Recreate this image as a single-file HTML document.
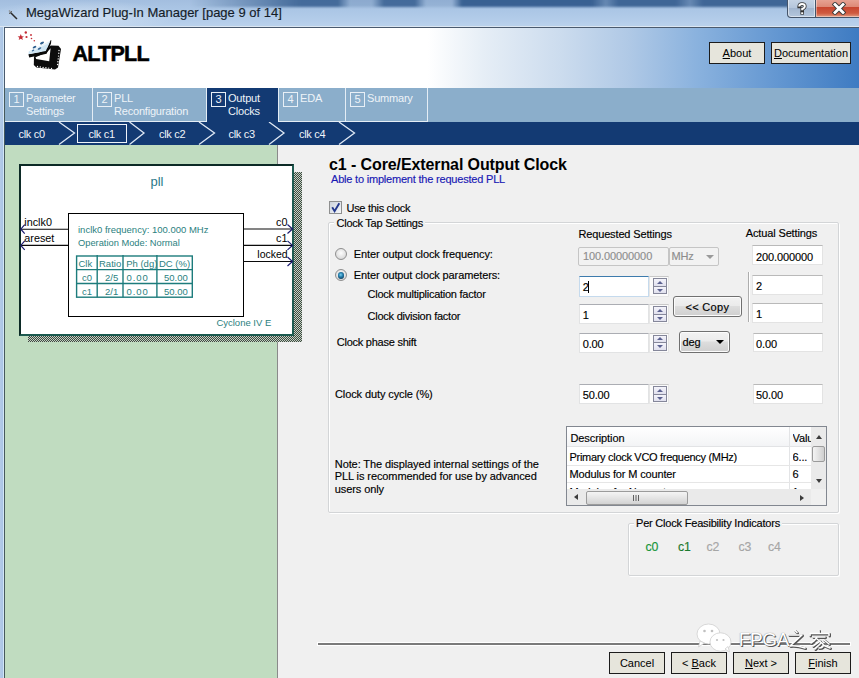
<!DOCTYPE html>
<html><head><meta charset="utf-8">
<style>
*{box-sizing:border-box;margin:0;padding:0}
html,body{width:859px;height:678px;overflow:hidden;background:#F0F0F0;font-family:"Liberation Sans",sans-serif;font-size:11px;color:#000}
.a{position:absolute}
.t{position:absolute;white-space:nowrap;line-height:1}
#title{left:0;top:0;width:859px;height:28px;background:linear-gradient(180deg,#a3bedf 0%,#abc6e5 35%,#b4cdea 75%,#bcd3ec 100%)}
#frame{left:0;top:27px;width:5px;height:651px;background:linear-gradient(90deg,#b4cbe6 0,#a9c4e6 3px,#d2e6f6 3px,#d2e6f6 4px,#46595c 4px)}
#header{left:4px;top:27px;width:855px;height:61px;border-top:1px solid #4a5a6e;border-left:1px solid #4a5a6e;background:linear-gradient(90deg,#fff 0%,#fff 49.5%,#e6eef6 56%,#ccdcee 65%,#b0c9e6 73%,#8ab2de 81%,#6598d2 90%,#3e7bc2 100%)}
#tabs{left:5px;top:88px;width:854px;height:34px;background:#8baecb}
#clkrow{left:5px;top:122px;width:854px;height:23px;background:#133a73}
#green{left:5px;top:145px;width:272px;height:533px;background:#c0dcc0}
#vline{left:277px;top:145px;width:1px;height:533px;background:#8a8a8a}
.btn{position:absolute;height:22px;border:1px solid #1c1c1c;background:#e6e5dc;text-align:center;line-height:20px;font-size:11px;color:#000}
.tab{position:absolute;top:88px;height:34px;color:#eef3f8;font-size:11px}
.tab.in{border-right:1px solid #e4edf5;border-bottom:1px solid #e4edf5}
.num{position:absolute;left:4px;top:4px;width:15px;height:15px;border:1px solid #e8eff6;text-align:center;line-height:13px;font-size:11px}
.tl{position:absolute;left:21px;top:4px;line-height:12.5px;letter-spacing:-0.2px}
.clk{position:absolute;top:129px;color:#f0f4fa;font-size:11px;line-height:1;letter-spacing:-0.3px}

.tx{position:absolute;white-space:nowrap;line-height:1;font-size:11px;letter-spacing:-0.12px;color:#000;-webkit-text-stroke:0.15px currentColor}
.tb{position:absolute;background:#fff;border:1px solid #e2e3e4;border-top-color:#abadb3}
.spin{position:absolute;width:20px;background:#fbfbfb;border:1px solid #e6e6e6;border-top-color:#c8c8c8}
.sb{position:absolute;left:3px;width:14px;height:8.5px;border:1px solid #85879a;background:linear-gradient(#f4f4fb,#e0e0ee)}
.sb.u{top:1px}.sb.d{top:8.5px}
.sb::after{content:"";position:absolute;left:3px;border-left:3.5px solid transparent;border-right:3.5px solid transparent}
.sb.u::after{top:1.8px;border-bottom:3.5px solid #5b6190}
.sb.d::after{top:2px;border-top:3.5px solid #5b6190}
.radio{position:absolute;width:12px;height:12px;border-radius:50%;border:1px solid #8f8f8f;background:radial-gradient(circle at 50% 40%,#fdfdfd,#dcdcdc 70%,#c8c8c8)}
.gb{position:absolute;border:1px solid #d3d5d7;border-radius:2px;box-shadow:inset 1px 1px 0 #fff,1px 1px 0 #fff}
.wbtn{position:absolute;border:1px solid #707070;border-radius:3px;background:linear-gradient(#f2f2f2 0%,#ebebeb 45%,#dddddd 50%,#cfcfcf 100%);box-shadow:inset 0 0 0 1px #fcfcfc}
</style></head><body>
<!-- Title bar -->
<div id="title" class="a"></div>
<div id="frame" class="a"></div>
<!-- header -->
<div id="header" class="a"></div>
<div class="t" style="left:72.5px;top:43.6px;font-size:21.5px;font-weight:bold;letter-spacing:-0.75px;color:#000;-webkit-text-stroke:0.5px #000">ALTPLL</div>
<div class="btn" style="left:709px;top:42px;width:56px"><u>A</u>bout</div>
<div class="btn" style="left:771px;top:42px;width:80px"><u>D</u>ocumentation</div>
<!-- tabs -->
<div id="tabs" class="a"></div>
<div class="tab in" style="left:5px;width:88px"><div class="num">1</div><div class="tl">Parameter<br>Settings</div></div>
<div class="tab in" style="left:93px;width:114px"><div class="num">2</div><div class="tl">PLL<br>Reconfiguration</div></div>
<div class="tab" style="left:207px;width:71px;background:#133a73"><div class="num">3</div><div class="tl">Output<br>Clocks</div></div>
<div class="tab in" style="left:278px;width:68px;border-left:1px solid #e4edf5"><div class="num" style="left:4px">4</div><div class="tl">EDA</div></div>
<div class="tab in" style="left:346px;width:82px"><div class="num">5</div><div class="tl">Summary</div></div>
<div id="clkrow" class="a"></div>
<!-- clk row -->
<svg class="a" style="left:0;top:122px" width="859" height="23">
<g fill="none" stroke="#dfe8f4" stroke-width="1.3">
<polyline points="59,0 74.5,11 59,22.5"/>
<polyline points="129.5,0 144,11 129.5,22.5"/>
<polyline points="199,0 214.5,11 199,22.5"/>
<polyline points="269,0 284,11 269,22.5"/>
<polyline points="339,0 354.5,11 339,22.5"/>
</g>
<rect x="77.5" y="2.5" width="49" height="18" fill="none" stroke="#eef3fa" stroke-width="1"/>
</svg>
<div class="clk" style="left:18.5px">clk c0</div>
<div class="clk" style="left:88.5px">clk c1</div>
<div class="clk" style="left:159px">clk c2</div>
<div class="clk" style="left:228.5px">clk c3</div>
<div class="clk" style="left:299px">clk c4</div>
<div id="green" class="a"></div>
<div id="vline" class="a"></div>
<!-- diagram -->
<div class="a" style="left:28px;top:172px;width:274px;height:170px;background:repeating-conic-gradient(#3e4a40 0 25%,#c4d0c4 0 50%) 0 0/2px 2px"></div>
<div class="a" style="left:19px;top:164px;width:275px;height:172px;background:#fff;border:2px solid #0c2a26;border-right-color:#1d5a50;border-bottom-color:#1d5a50"></div>
<div class="a" style="left:68px;top:213px;width:176px;height:104px;border:1px solid #000"></div>
<div class="t" style="left:150.5px;top:175px;font-size:13px;color:#2a7888">pll</div>
<svg class="a" style="left:0;top:200px" width="300" height="80">
<g stroke="#0a0a0a" stroke-width="1.1" fill="none">
<line x1="20" y1="29.2" x2="68" y2="29.2"/>
<line x1="20" y1="45.4" x2="68" y2="45.4"/>
<line x1="243" y1="29" x2="293" y2="29"/>
<line x1="243" y1="45.4" x2="293" y2="45.4"/>
<line x1="243" y1="61.5" x2="293" y2="61.5"/>
</g>
<g stroke="#1b1b70" stroke-width="1.2" fill="none">
<polyline points="24.7,24.7 20.8,29.2 24.7,33.6"/>
<polyline points="24.7,40.9 20.8,45.4 24.7,49.8"/>
<polyline points="287.5,24.5 292.5,29 287.5,33.5"/>
<polyline points="287.5,40.9 292.5,45.4 287.5,49.9"/>
<polyline points="287.5,57 292.5,61.5 287.5,66"/>
</g>
</svg>
<div class="t" style="left:24.3px;top:217px;font-size:10.8px;color:#000">inclk0</div>
<div class="t" style="left:24.3px;top:232.7px;font-size:10.8px;color:#000">areset</div>
<div class="t" style="left:276px;top:216.5px;font-size:10.8px;color:#000">c0</div>
<div class="t" style="left:276px;top:232.5px;font-size:10.8px;color:#000">c1</div>
<div class="t" style="left:257.3px;top:248.5px;font-size:10.5px;color:#000">locked</div>
<div class="t" style="left:78px;top:225px;font-size:9.5px;color:#2b7f80">inclk0 frequency: 100.000 MHz</div>
<div class="t" style="left:78px;top:238.5px;font-size:9.3px;color:#2b7f80">Operation Mode: Normal</div>
<div class="t" style="left:216.4px;top:318px;font-size:9.5px;color:#2b7f80">Cyclone IV E</div>
<svg class="a" style="left:70px;top:250px" width="130" height="52">
<g stroke="#1d7c7c" stroke-width="1.4" fill="none">
<rect x="6.6" y="6" width="115.7" height="41.2"/>
<line x1="6.6" y1="19.6" x2="122.3" y2="19.6"/>
<line x1="6.6" y1="33.5" x2="122.3" y2="33.5"/>
<line x1="27.2" y1="5" x2="27.2" y2="47.2"/>
<line x1="53" y1="5" x2="53" y2="47.2"/>
<line x1="86.9" y1="5" x2="86.9" y2="47.2"/>
</g>
<g font-family="Liberation Sans" font-size="9.5" fill="#2b7f80">
<text x="8.5" y="17">Clk</text><text x="29" y="17">Ratio</text><text x="56.2" y="17">Ph (dg)</text><text x="89" y="17">DC (%)</text>
<text x="12" y="30.5">c0</text><text x="35" y="30.5">2/5</text><text x="56.4" y="30.5" letter-spacing="1">0.00</text><text x="94" y="30.5">50.00</text>
<text x="12" y="44.5">c1</text><text x="35" y="44.5">2/1</text><text x="56.4" y="44.5" letter-spacing="1">0.00</text><text x="94" y="44.5">50.00</text>
</g>
</svg>
<!-- right panel -->
<div class="t" style="left:329px;top:156.5px;font-size:16px;font-weight:bold;letter-spacing:-0.1px;color:#000">c1 - Core/External Output Clock</div>
<div class="tx" style="left:331px;top:173.5px;color:#1818b4;letter-spacing:-0.2px">Able to implement the requested PLL</div>
<div class="a" style="left:329px;top:201px;width:13px;height:13px;border:1px solid #8e8f8f;background:linear-gradient(135deg,#cdd3dc,#f4f6f9)"></div>
<svg class="a" style="left:329px;top:201px" width="13" height="13"><polyline points="3.2,6.2 5.6,10.2 10.3,2.3" fill="none" stroke="#23388c" stroke-width="1.9"/></svg>
<div class="tx" style="left:346.5px;top:202.5px;letter-spacing:-0.3px">Use this clock</div>
<div class="gb" style="left:328px;top:222px;width:511px;height:291px"></div>
<div class="tx" style="left:334px;top:218px;padding:0 2.5px;background:#f0f0f0;letter-spacing:-0.25px">Clock Tap Settings</div>
<div class="tx" style="left:578.4px;top:228.8px;letter-spacing:-0.14px">Requested Settings</div>
<div class="tx" style="left:745.8px;top:228px;letter-spacing:-0.14px">Actual Settings</div>
<div class="radio" style="left:335px;top:248.3px"></div>
<div class="tx" style="left:353.8px;top:249px">Enter output clock frequency:</div>
<div class="radio" style="left:335px;top:269.3px"></div>
<div class="a" style="left:337.8px;top:272.1px;width:6.5px;height:6.5px;border-radius:50%;background:radial-gradient(circle at 45% 40%,#7fd0ee 0%,#2a86b4 35%,#0d3d5e 80%)"></div>
<div class="tx" style="left:353.8px;top:270px">Enter output clock parameters:</div>
<div class="tx" style="left:367.6px;top:289.2px;letter-spacing:-0.25px">Clock multiplication factor</div>
<div class="tx" style="left:367.6px;top:311.2px;letter-spacing:-0.25px">Clock division factor</div>
<div class="tx" style="left:336.8px;top:337.4px;letter-spacing:-0.25px">Clock phase shift</div>
<div class="tx" style="left:335px;top:389.2px;letter-spacing:-0.1px">Clock duty cycle (%)</div>
<!-- requested freq -->
<div class="a" style="left:578px;top:247px;width:91px;height:19px;border:1px solid #c5c5c5;border-radius:2px;background:#f2f2f2"></div>
<div class="tx" style="left:583px;top:251.3px;color:#8d8d8d;letter-spacing:-0.1px">100.00000000</div>
<div class="a" style="left:668.5px;top:247px;width:50px;height:19px;border:1px solid #c5c5c5;border-radius:2px;background:#f2f2f2"></div>
<div class="tx" style="left:671.5px;top:251.3px;color:#8d8d8d">MHz</div>
<div class="a" style="left:706px;top:255px;width:0;height:0;border-left:4px solid transparent;border-right:4px solid transparent;border-top:4px solid #9a9a9a"></div>
<!-- spin 2 -->
<div class="tb" style="left:578.5px;top:276px;width:70.5px;height:20.5px;border-color:#c5daed;border-top-color:#3d7bad"></div>
<div class="tx" style="left:582.7px;top:281.8px">2</div>
<div class="a" style="left:588px;top:280.5px;width:1px;height:12.5px;background:#000"></div>
<div class="spin" style="left:649px;top:276px;height:20.5px"><div class="sb u"></div><div class="sb d"></div></div>
<!-- spin 1 -->
<div class="tb" style="left:578.5px;top:304px;width:70.5px;height:20px"></div>
<div class="tx" style="left:582.7px;top:310.4px">1</div>
<div class="spin" style="left:649px;top:304px;height:20px"><div class="sb u"></div><div class="sb d"></div></div>
<!-- spin 0.00 -->
<div class="tb" style="left:578.5px;top:332.5px;width:70.5px;height:20px"></div>
<div class="tx" style="left:582.7px;top:338.5px">0.00</div>
<div class="spin" style="left:649px;top:332.5px;height:20px"><div class="sb u"></div><div class="sb d"></div></div>
<!-- spin 50.00 -->
<div class="tb" style="left:578.5px;top:384px;width:70.5px;height:20px"></div>
<div class="tx" style="left:582.7px;top:390.3px">50.00</div>
<div class="spin" style="left:649px;top:384px;height:20px"><div class="sb u"></div><div class="sb d"></div></div>
<!-- copy & deg -->
<div class="wbtn" style="left:673px;top:296px;width:69px;height:21px"></div>
<div class="tx" style="left:685.5px;top:302px;letter-spacing:0.3px">&lt;&lt; Copy</div>
<div class="wbtn" style="left:679px;top:331px;width:51px;height:22px"></div>
<div class="tx" style="left:682.5px;top:337px">deg</div>
<div class="a" style="left:716px;top:340px;width:0;height:0;border-left:4px solid transparent;border-right:4px solid transparent;border-top:4.5px solid #000"></div>
<!-- actual -->
<div class="tb" style="left:752px;top:245px;width:71px;height:19.5px;border-color:#e3e3e3;border-top-color:#b9b9b9"></div>
<div class="tx" style="left:756px;top:251.5px">200.000000</div>
<div class="a" style="left:747.5px;top:272px;width:1px;height:50px;background:#adadad;box-shadow:1px 0 0 #fff"></div>
<div class="tb" style="left:752px;top:275px;width:71px;height:19.5px;border-color:#e3e3e3;border-top-color:#b9b9b9"></div>
<div class="tx" style="left:756px;top:281.0px">2</div>
<div class="tb" style="left:752px;top:303px;width:71px;height:19.5px;border-color:#e3e3e3;border-top-color:#b9b9b9"></div>
<div class="tx" style="left:756px;top:309.0px">1</div>
<div class="tb" style="left:752.5px;top:332.5px;width:70.5px;height:19px;border-color:#e3e3e3;border-top-color:#b9b9b9"></div>
<div class="tx" style="left:756px;top:338.5px">0.00</div>
<div class="tb" style="left:752.5px;top:384px;width:70.5px;height:19.5px;border-color:#e3e3e3;border-top-color:#b9b9b9"></div>
<div class="tx" style="left:756px;top:390.0px">50.00</div>
<!-- note -->
<div class="tx" style="left:334.8px;top:457.8px;line-height:12.6px;letter-spacing:-0.1px">Note: The displayed internal settings of the<br>PLL is recommended for use by advanced<br>users only</div>
<!-- table -->
<div class="a" style="left:566px;top:426px;width:261px;height:80px;border:1px solid #828790;background:#fff;overflow:hidden">
 <div class="a" style="left:0;top:0;width:244px;height:20px;background:linear-gradient(#ffffff,#f3f4f6);border-bottom:1px solid #e2e3e5"></div>
 <div class="a" style="left:221.5px;top:0;width:1px;height:62px;background:#e3e4e6"></div>
 <div class="a" style="left:0;top:37.5px;width:244px;height:1px;background:#e6e6e6"></div>
 <div class="a" style="left:0;top:54.5px;width:244px;height:1px;background:#e6e6e6"></div>
 <div class="tx" style="left:3.5px;top:5.6px;letter-spacing:-0.1px">Description</div>
 <div class="tx" style="left:225.5px;top:5.6px;width:18px;overflow:hidden">Valu</div>
 <div class="tx" style="left:2.5px;top:25px;letter-spacing:-0.3px">Primary clock VCO frequency (MHz)</div>
 <div class="tx" style="left:225.5px;top:25px;width:19px;overflow:hidden">6...</div>
 <div class="tx" style="left:2.5px;top:41.8px;letter-spacing:-0.15px">Modulus for M counter</div>
 <div class="tx" style="left:225.5px;top:41.8px">6</div>
 <div class="tx" style="left:2.5px;top:59.5px;letter-spacing:-0.1px">Modulus for N counter</div>
 <div class="tx" style="left:225.5px;top:59.5px">1</div>
 <!-- v scroll -->
 <div class="a" style="left:243.5px;top:0;width:16px;height:62px;background:#eaeaea"></div>
 <div class="a" style="left:248.5px;top:8px;width:0;height:0;border-left:3.5px solid transparent;border-right:3.5px solid transparent;border-bottom:4px solid #3c3c3c"></div>
 <div class="a" style="left:244.5px;top:18.5px;width:13px;height:16px;border:1px solid #9b9b9b;border-radius:2px;background:linear-gradient(90deg,#f4f4f4,#e2e2e2 50%,#cfcfcf)"></div>
 <div class="a" style="left:248.5px;top:52px;width:0;height:0;border-left:3.5px solid transparent;border-right:3.5px solid transparent;border-top:4px solid #3c3c3c"></div>
 <!-- h scroll -->
 <div class="a" style="left:0;top:62px;width:244px;height:17px;background:#eaeaea"></div>
 <div class="a" style="left:7px;top:67px;width:0;height:0;border-top:3.5px solid transparent;border-bottom:3.5px solid transparent;border-right:4px solid #3c3c3c"></div>
 <div class="a" style="left:19px;top:63.5px;width:101.5px;height:14.5px;border:1px solid #9b9b9b;border-radius:2px;background:linear-gradient(#f4f4f4,#e4e4e4 50%,#d2d2d2)"></div>
 <div class="a" style="left:66px;top:67.5px;width:1.2px;height:6.5px;background:#606060;box-shadow:2.5px 0 0 #606060,5px 0 0 #606060"></div>
 <div class="a" style="left:233px;top:67.5px;width:0;height:0;border-top:3.5px solid transparent;border-bottom:3.5px solid transparent;border-left:4px solid #3c3c3c"></div>
 <div class="a" style="left:243.5px;top:62px;width:16px;height:17px;background:#f0f0f0"></div>
</div>
<!-- feasibility -->
<div class="gb" style="left:628px;top:522.5px;width:211px;height:53px"></div>
<div class="tx" style="left:634px;top:517.6px;padding:0 2px;background:#f0f0f0;letter-spacing:-0.2px">Per Clock Feasibility Indicators</div>
<div class="tx" style="left:645.5px;top:540.6px;font-size:12.3px;color:#17963a">c0</div>
<div class="tx" style="left:678px;top:540.6px;font-size:12.3px;color:#1b7a2e">c1</div>
<div class="tx" style="left:706.5px;top:540.6px;font-size:12.3px;color:#a6a6a6">c2</div>
<div class="tx" style="left:738.5px;top:540.6px;font-size:12.3px;color:#a6a6a6">c3</div>
<div class="tx" style="left:768px;top:540.6px;font-size:12.3px;color:#a6a6a6">c4</div>
<!-- separator -->
<div class="a" style="left:317px;top:642px;width:534px;height:4px;background:#fff"></div>
<div class="a" style="left:318px;top:643px;width:532px;height:2px;background:#7a7a7a"></div>
<!-- bottom buttons -->
<div class="btn" style="left:609px;top:652px;width:56px">Cancel</div>
<div class="btn" style="left:671px;top:652px;width:56px">&lt; <u>B</u>ack</div>
<div class="btn" style="left:733px;top:652px;width:56px"><u>N</u>ext &gt;</div>
<div class="btn" style="left:795px;top:652px;width:56px"><u>F</u>inish</div>
<!-- titlebar extras -->
<div class="a" style="left:0;top:0;width:859px;height:27px;overflow:hidden">
<div class="a" style="left:0;top:-2px;width:859px;height:8.5px;background:linear-gradient(90deg,rgba(52,92,142,0.00) 0.00%,rgba(52,92,142,0.00) 22.12%,rgba(52,92,142,0.70) 32.60%,rgba(52,92,142,0.85) 34.92%,rgba(52,92,142,0.85) 39.35%,rgba(52,92,142,0.20) 40.75%,rgba(52,92,142,0.20) 43.31%,rgba(52,92,142,0.85) 44.70%,rgba(52,92,142,0.85) 48.31%,rgba(52,92,142,0.15) 49.59%,rgba(52,92,142,0.15) 52.62%,rgba(52,92,142,0.95) 53.78%,rgba(52,92,142,0.95) 68.92%,rgba(52,92,142,0.55) 70.55%,rgba(52,92,142,0.90) 71.94%,rgba(52,92,142,0.90) 78.70%,rgba(52,92,142,0.55) 80.33%,rgba(52,92,142,0.90) 81.84%,rgba(52,92,142,0.90) 91.62%,rgba(52,92,142,0.90) 100.00%);filter:blur(1.2px)"></div>
<div class="a" style="left:0;top:0;width:180px;height:27px;background:radial-gradient(ellipse at 45% 60%,rgba(235,242,250,0.55),rgba(235,242,250,0) 70%)"></div>
</div>
<div class="a" style="left:0;top:26px;width:859px;height:1px;background:#dbe6f2"></div>
<div class="t" style="left:26px;top:6px;font-size:13px;color:#141c28;-webkit-text-stroke:0.15px #141c28">MegaWizard Plug-In Manager [page 9 of 14]</div>

<svg class="a" style="left:7px;top:8.5px" width="12" height="12"><line x1="3" y1="3" x2="10" y2="10" stroke="#2a2a2a" stroke-width="1.5"/><line x1="2" y1="5" x2="5" y2="2" stroke="#666" stroke-width="1"/><circle cx="2.5" cy="2" r="0.8" fill="#888"/></svg>
<div class="a" style="left:787px;top:-2px;width:29px;height:20px;border:1px solid #44546a;border-top:none;border-radius:0 0 0 4px;background:linear-gradient(#c9d6e6 0%,#b5c6dc 50%,#a1b5cf 52%,#b4c6dc 100%);box-shadow:inset 0 0 0 1px rgba(255,255,255,0.5)"></div>
<svg class="a" style="left:796px;top:2px" width="12" height="13"><path d="M3.2,4.5 Q3.2,2 6,2 Q8.8,2 8.8,4.3 Q8.8,6 6.2,7 L6.2,8.3" fill="none" stroke="#333" stroke-width="3.6" stroke-linecap="square"/><rect x="4.4" y="9.6" width="3.6" height="3" fill="#333"/><path d="M3.2,4.5 Q3.2,2 6,2 Q8.8,2 8.8,4.3 Q8.8,6 6.2,7 L6.2,8.3" fill="none" stroke="#fff" stroke-width="2" stroke-linecap="butt"/><rect x="5.2" y="10.3" width="2" height="1.7" fill="#fff"/></svg>
<div class="a" style="left:815px;top:-2px;width:46px;height:20px;border:1px solid #44546a;border-top:none;border-right:none;background:linear-gradient(#e9a89a 0%,#de8a78 45%,#c84630 50%,#cf5a40 80%,#e29a80 100%);box-shadow:inset 0 0 0 1px rgba(255,255,255,0.4)"></div>
<svg class="a" style="left:832px;top:2px" width="14" height="13"><path d="M3,2.5 L11,10.5 M11,2.5 L3,10.5" stroke="#3a3a3a" stroke-width="4.6" stroke-linecap="square"/><path d="M3,2.5 L11,10.5 M11,2.5 L3,10.5" stroke="#fff" stroke-width="2.8" stroke-linecap="square"/></svg>
<!-- logo -->
<svg class="a" style="left:14px;top:28px" width="50" height="46">
<g fill="#c42a34">
<polygon points="6.8,6 7.7,8.3 10,8.4 8.2,9.8 8.9,12 6.8,10.7 4.7,12 5.4,9.8 3.6,8.4 5.9,8.3"/>
<circle cx="11.8" cy="4.5" r="1.2"/><circle cx="12.5" cy="9" r="1.1"/><circle cx="17" cy="7" r="0.9"/><circle cx="17.5" cy="10.5" r="0.8"/><circle cx="20.3" cy="12.7" r="0.8"/>
</g>
<g transform="translate(-24,-36) translate(14,28)">
</g>
</svg>
<svg class="a" style="left:0;top:0" width="70" height="80">
<polygon points="34,56.5 50.8,45.5 58.5,45.8 61,49 58,67.5 55,69.5 36.5,67.5 33.8,65" fill="#0c0c0c"/>
<g fill="#fff">
<circle cx="37.5" cy="66.5" r="0.7"/><circle cx="40.3" cy="67" r="0.7"/><circle cx="43.1" cy="67.4" r="0.7"/><circle cx="45.9" cy="67.8" r="0.7"/><circle cx="48.7" cy="68.1" r="0.7"/><circle cx="51.5" cy="68.4" r="0.7"/>
<circle cx="59" cy="50.5" r="0.7"/><circle cx="58.8" cy="53.3" r="0.7"/><circle cx="58.5" cy="56.1" r="0.7"/><circle cx="58.2" cy="58.9" r="0.7"/><circle cx="57.9" cy="61.7" r="0.7"/><circle cx="57.6" cy="64.5" r="0.7"/>
</g>
<polygon points="35.5,57.3 47,52.2 50.6,48.3 49.2,61.3 36.2,59" fill="#fff"/>
<polygon points="28.4,54.3 45.8,51.1 50.4,40.6 51.3,40 51,43.5 46.6,53.8 29.2,57.6" fill="#0a0a0a"/>
<polygon points="28.7,51.6 50.3,40.9 45.8,51.1 28.5,54.3" fill="#cfe6f4"/>
<polygon points="30,51.2 49,41.8 48.2,43.6 30.5,52.3" fill="#eef6fb"/>
<g fill="#2e5f8e">
<ellipse cx="34.5" cy="47.2" rx="2" ry="1" transform="rotate(-28 34.5 47.2)"/>
<ellipse cx="42" cy="43" rx="2.2" ry="1" transform="rotate(-28 42 43)"/>
<ellipse cx="39.5" cy="48.5" rx="2" ry="0.9" transform="rotate(-28 39.5 48.5)"/>
<ellipse cx="33" cy="50.5" rx="1.4" ry="0.7" transform="rotate(-28 33 50.5)"/>
</g>
</svg>
<!-- watermark -->
<svg class="a" style="left:690px;top:620px" width="150" height="45">
<g fill="#fff" stroke="#cfcfcf" stroke-width="0.8">
<ellipse cx="18.5" cy="14" rx="11.5" ry="10"/>
<path d="M10,21 L8.5,27 L14.5,23 Z"/>
<ellipse cx="30.5" cy="22" rx="10.5" ry="9.2"/>
<path d="M35,29 L39.5,32 L38,26.5 Z"/>
</g>
<g fill="#c0c0c0"><circle cx="14.5" cy="11" r="1.3"/><circle cx="22" cy="11" r="1.3"/><circle cx="27" cy="20" r="1.1"/><circle cx="33.5" cy="20" r="1.1"/></g>
</svg>
<div class="t" style="left:738.8px;top:629.5px;font-size:19px;color:#fff;letter-spacing:-0.4px;text-shadow:1px 1px 0 #555,0 0 1px #666">FPGA</div>
<svg class="a" style="left:786px;top:629px" width="46" height="22">
<g fill="none" stroke-linecap="round" stroke-linejoin="round">
<g stroke="#555" stroke-width="2.4" transform="translate(0.8,0.8)">
<path d="M9,1.5 L11,3.5 M3,6 L16,6 L4,17 Q9,16 19,19"/>
<path d="M33,1.5 L33,4 M24,6.5 L24,4.5 L43,4.5 L43,6.5 M27,8 L39,8 M31,8 Q29,12 25,14 M31,10 L37,15 Q38,19 33,19 M34,12 L27,17 M35,14 L29,20 M38,11 L43,15 M37,16 L44,19"/>
</g>
<g stroke="#fff" stroke-width="1.6">
<path d="M9,1.5 L11,3.5 M3,6 L16,6 L4,17 Q9,16 19,19"/>
<path d="M33,1.5 L33,4 M24,6.5 L24,4.5 L43,4.5 L43,6.5 M27,8 L39,8 M31,8 Q29,12 25,14 M31,10 L37,15 Q38,19 33,19 M34,12 L27,17 M35,14 L29,20 M38,11 L43,15 M37,16 L44,19"/>
</g>
</g>
</svg>
</body></html>
